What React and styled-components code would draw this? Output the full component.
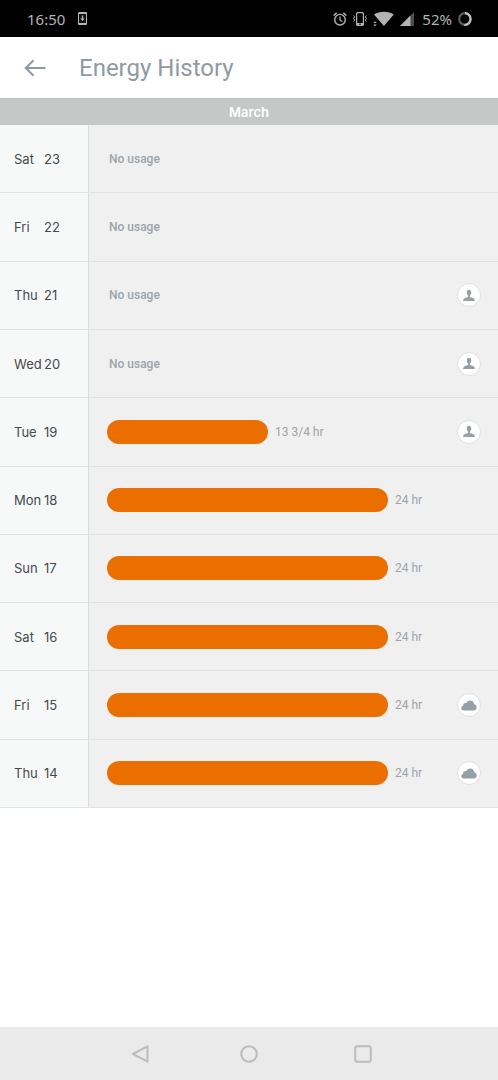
import React from "react";
import styled, { createGlobalStyle } from "styled-components";

const GlobalStyle = createGlobalStyle`
  *, *::before, *::after { box-sizing: border-box; }
  html, body, #root { min-height: 100vh; }
  body {
    margin: 0;
    background: #ffffff;
    font-family: Inter, "Liberation Sans", sans-serif;
  }
`;

const Screen = styled.div`
  display: flex;
  flex-direction: column;
  min-height: 100vh;
`;

const StatusBar = styled.div`
  display: flex;
  align-items: center;
  justify-content: space-between;
  height: 37px;
  padding: 0 26px 0 27px;
  background: #000000;
  color: #b4b4b4;
  font: 15px/20px "Noto Sans", "Open Sans", sans-serif;
`;

const StatusGroup = styled.div`
  display: flex;
  align-items: center;
  gap: ${(p) => p.$gap}px;
`;

const StatusIcons = styled.div`
  display: flex;
  align-items: center;
  gap: 6px;
  padding-right: 2px;
`;

const Icon = styled.svg`
  display: block;
  flex: none;
`;

const Header = styled.header`
  display: flex;
  align-items: center;
  gap: 28px;
  height: 61px;
  padding: 0 19px;
`;

const BackButton = styled.button`
  display: flex;
  align-items: center;
  justify-content: center;
  width: 32px;
  height: 40px;
  padding: 0;
  border: 0;
  background: none;
  color: #8f9aa3;
  cursor: pointer;
`;

const Title = styled.h1`
  margin: 0;
  color: #8f9aa3;
  font-family: Roboto, sans-serif;
  font-size: 24px;
  font-weight: 400;
  line-height: 32px;
`;

const MonthHeading = styled.h2`
  margin: 0;
  height: 27px;
  border-top: 1px solid #bfc0c0;
  background: #c6c8c7;
  color: #ffffff;
  font-size: 13px;
  font-weight: 600;
  line-height: 26px;
  text-align: center;
`;

const DayList = styled.ul`
  display: grid;
  grid-auto-rows: 1fr;
  min-height: 683px;
  margin: 0;
  padding: 0;
  list-style: none;
`;

const DayRow = styled.li`
  display: grid;
  grid-template-columns: 89px 1fr;
  border-bottom: 1px solid #e0e2e3;
  background: #f0f0f0;
`;

const DayDate = styled.div`
  display: grid;
  grid-template-columns: 30px 1fr;
  align-items: center;
  padding-left: 14px;
  border-right: 1px solid #dadbde;
  background: #f7f9f8;
  color: #45494c;
  font-size: 13px;
  line-height: 20px;
`;

const Usage = styled.div`
  display: flex;
  align-items: center;
  gap: 7px;
  padding: 0 17px 0 18px;
`;

const UsageBar = styled.div`
  flex: none;
  height: 24px;
  border-radius: 12px;
  background: #eb6e00;
`;

const UsageLabel = styled.span`
  padding-left: ${(p) => (p.$empty ? 2 : 0)}px;
  color: #9ba4ab;
  font-family: Roboto, sans-serif;
  font-size: 12px;
  font-weight: ${(p) => (p.$empty ? 500 : 400)};
  line-height: 20px;
  white-space: nowrap;
`;

const Badge = styled.span`
  display: flex;
  align-items: center;
  justify-content: center;
  flex: none;
  width: 24px;
  height: 24px;
  margin-left: auto;
  border: 1px solid #dddfe0;
  border-radius: 50%;
  background: #ffffff;
  color: #979fa6;
`;

const NavBar = styled.nav`
  display: flex;
  align-items: center;
  justify-content: center;
  gap: 82px;
  height: 53px;
  margin-top: auto;
  background: #eaeaea;
`;

const NavButton = styled.button`
  display: flex;
  align-items: center;
  justify-content: center;
  width: 32px;
  height: 40px;
  padding: 0;
  border: 0;
  background: none;
  color: #bcbcbc;
  cursor: pointer;
`;

const days = [
  { day: "Sat", date: 23, hours: 0 },
  { day: "Fri", date: 22, hours: 0 },
  { day: "Thu", date: 21, hours: 0, reason: "person" },
  { day: "Wed", date: 20, hours: 0, reason: "person" },
  { day: "Tue", date: 19, hours: 13.75, label: "13 3/4 hr", reason: "person" },
  { day: "Mon", date: 18, hours: 24, label: "24 hr" },
  { day: "Sun", date: 17, hours: 24, label: "24 hr" },
  { day: "Sat", date: 16, hours: 24, label: "24 hr" },
  { day: "Fri", date: 15, hours: 24, label: "24 hr", reason: "cloud" },
  { day: "Thu", date: 14, hours: 24, label: "24 hr", reason: "cloud" },
];

function DownloadIcon() {
  return (
    <Icon width="9" height="13" viewBox="0 0 9 13">
      <rect width="9" height="13" rx="1" fill="#b4b4b4" />
      <rect x="1" y="2" width="7" height="9" fill="#111" />
      <path d="M3.800 3.500h1.400v3h1.600L4.500 9 2.200 6.500h1.600z" fill="#b4b4b4" />
    </Icon>
  );
}

function AlarmIcon() {
  return (
    <Icon width="14" height="14" viewBox="0 0 14 14" fill="none" stroke="currentColor">
      <circle cx="7" cy="7.700" r="5.300" strokeWidth="1.400" />
      <path d="M7 4.600v3.400l2.300 1.500" strokeWidth="1.200" />
      <path d="M.6 3.500 3.700.9M13.400 3.500 10.300.9" strokeWidth="1.500" />
    </Icon>
  );
}

function VibrateIcon() {
  return (
    <Icon width="14" height="14" viewBox="0 0 14 14" fill="none" stroke="currentColor">
      <rect x="3.600" y=".7" width="6.800" height="12.600" rx="1" strokeWidth="1.200" />
      <path d="M3.600 11h6.800v2.300H3.600z" fill="currentColor" stroke="none" />
      <path d="M6 12.200h2" stroke="#000" />
      <path d="M.6 3.500 1.700 5 .6 6.500 1.700 8 .6 9.500M13.400 3.500 12.300 5l1.100 1.500L12.300 8l1.100 1.500" />
    </Icon>
  );
}

function WifiIcon() {
  return (
    <Icon width="21" height="16" viewBox="0 0 21 16" fill="currentColor">
      <path d="M1 3.600C6.500-.2 15.500-.2 20.800 3.600L10.900 15z" />
      <path d="M.2 12 2 10.200 3.800 12zM.2 13.500h3.600L2 15.300z" />
    </Icon>
  );
}

function SignalIcon() {
  return (
    <Icon width="14" height="14" viewBox="0 0 14 14">
      <path d="M0 14 14 0v14z" fill="#4c4c4c" />
      <path d="M0 14 10.500 3.500V14z" fill="currentColor" />
    </Icon>
  );
}

function BatteryIcon() {
  return (
    <Icon width="14" height="14" viewBox="0 0 14 14" fill="none" strokeWidth="2.200">
      <circle cx="7" cy="7" r="5.800" stroke="#5c5c5c" />
      <path d="M7 1.200a5.800 5.800 0 1 1-.6 11.600" stroke="#c4c4c4" />
    </Icon>
  );
}

function ReasonIcon({ type }) {
  if (type === "cloud") {
    return (
      <Icon width="16" height="11" viewBox="0 0 16 11" fill="currentColor">
        <path d="M2.800 10.500C1.200 10.500.3 9.500.3 8.200c0-1.200.7-2 1.700-2.300C2 4 3.400 2.700 5.300 3.100 6.100 1.400 7.500.4 9.200.4c2.200 0 3.900 1.600 4 3.900 1.400.3 2.500 1.500 2.500 3.100 0 1.800-1.200 3.100-3 3.100z" />
      </Icon>
    );
  }
  return (
    <Icon width="12" height="13" viewBox="0 0 12 13" fill="currentColor">
      <path d="M6 .8c1.500 0 2.200 1 2.200 2.700S7.400 6.300 6.900 6.700v1c.5.600 1.400.7 2.400 1 1.600.5 2.500 1.300 2.600 3.300H.1c.1-2 1-2.800 2.600-3.300 1-.3 1.900-.4 2.400-1v-1C4.600 6.300 3.800 5.200 3.800 3.500S4.500.8 6 .8z" />
    </Icon>
  );
}

function Day({ day, date, hours, label, reason }) {
  return (
    <DayRow>
      <DayDate>
        <span>{day}</span>
        <span>{date}</span>
      </DayDate>
      <Usage>
        {hours > 0 && (
          <UsageBar style={{ width: `calc((100% - 93px) * ${hours / 24})` }} />
        )}
        <UsageLabel $empty={!hours}>{label || "No usage"}</UsageLabel>
        {reason && (
          <Badge>
            <ReasonIcon type={reason} />
          </Badge>
        )}
      </Usage>
    </DayRow>
  );
}

export default function App() {
  return (
    <>
      <GlobalStyle />
      <Screen>
        <StatusBar>
          <StatusGroup $gap={13}>
            <span>16:50</span>
            <DownloadIcon />
          </StatusGroup>
          <StatusGroup $gap={6}>
            <StatusIcons>
              <AlarmIcon />
              <VibrateIcon />
              <WifiIcon />
              <SignalIcon />
            </StatusIcons>
            <span>52%</span>
            <BatteryIcon />
          </StatusGroup>
        </StatusBar>
        <Header>
          <BackButton aria-label="Back">
            <Icon width="22" height="18" viewBox="0 0 22 18" fill="none" stroke="currentColor" strokeWidth="2">
              <path d="M21.500 9H2M9.500 1.200 1.800 9l7.700 7.800" />
            </Icon>
          </BackButton>
          <Title>Energy History</Title>
        </Header>
        <main>
          <MonthHeading>March</MonthHeading>
          <DayList>
            {days.map((d) => (
              <Day key={d.date} {...d} />
            ))}
          </DayList>
        </main>
        <NavBar>
          <NavButton aria-label="Back">
            <Icon width="28" height="18" viewBox="0 0 28 18" fill="none" stroke="currentColor" strokeWidth="2" strokeLinejoin="round">
              <path d="M26.500 1.300v15.400L12 9z" />
            </Icon>
          </NavButton>
          <NavButton aria-label="Home">
            <Icon width="18" height="18" viewBox="0 0 18 18" fill="none" stroke="currentColor" strokeWidth="2">
              <circle cx="9" cy="9" r="7.800" />
            </Icon>
          </NavButton>
          <NavButton aria-label="Recent apps">
            <Icon width="18" height="18" viewBox="0 0 18 18" fill="none" stroke="currentColor" strokeWidth="2">
              <rect x="1.200" y="1.200" width="15.600" height="15.600" rx="2" />
            </Icon>
          </NavButton>
        </NavBar>
      </Screen>
    </>
  );
}
